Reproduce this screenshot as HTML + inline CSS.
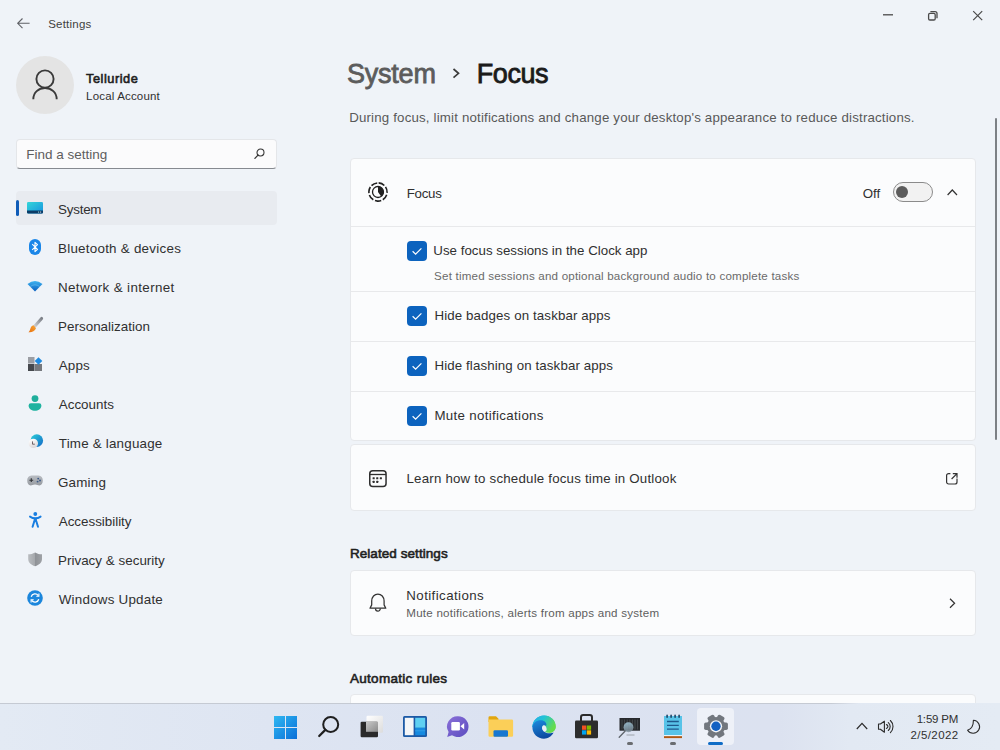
<!DOCTYPE html>
<html><head><meta charset="utf-8">
<style>
*{margin:0;padding:0;box-sizing:border-box}
html,body{width:1000px;height:750px;overflow:hidden}
body{background:#eff3f8;font-family:"Liberation Sans",sans-serif;color:#1b1b1b;position:relative}
.abs{position:absolute}
.t{position:absolute;white-space:nowrap;line-height:1}
.card{position:absolute;background:#fbfcfd;border:1px solid #e6e8eb;border-radius:4px}
.sep{position:absolute;height:1px;background:#e8e9eb}
.chk{position:absolute;width:20px;height:20px;border-radius:4px;background:#0c63be}
.chk svg{position:absolute;left:0;top:0}
svg{position:absolute;overflow:visible}
</style></head>
<body>
<!-- title bar -->
<svg style="left:17px;top:18px" width="13" height="11" viewBox="0 0 13 11"><path d="M5.5 0.5 L0.7 5.3 L5.5 10.1 M0.7 5.3 H12.6" stroke="#5f6166" stroke-width="1.1" fill="none"/></svg>
<svg style="left:860px;top:0px" width="140" height="40" viewBox="860 0 140 40">
<path d="M883 14.8 H893" stroke="#4a4a4a" stroke-width="1.3"/>
<rect x="928.6" y="13.4" width="6.6" height="6.6" rx="1.3" stroke="#4a4a4a" fill="none" stroke-width="1.3"/>
<path d="M930.4 11.6 H935 A2 2 0 0 1 937 13.6 V18.2" stroke="#4a4a4a" fill="none" stroke-width="1.3"/>
<path d="M973.2 11.2 L982.2 20.2 M982.2 11.2 L973.2 20.2" stroke="#4a4a4a" stroke-width="1.2"/>
</svg>

<!-- profile -->
<div class="abs" style="left:16px;top:56px;width:58px;height:58px;border-radius:50%;background:#e4e4e4"></div>
<svg style="left:31px;top:69px" width="28" height="32" viewBox="0 0 28 32"><circle cx="14" cy="10" r="8.6" stroke="#3a3a3a" stroke-width="1.9" fill="none"/><path d="M2.3 30.3 C2.3 23.5 7.5 19 14 19 C20.5 19 25.7 23.5 25.7 30.3" stroke="#3a3a3a" stroke-width="1.9" fill="none"/></svg>

<!-- search -->
<div class="abs" style="left:16px;top:139px;width:261px;height:30px;background:#fbfbfc;border:1px solid #e4e6e9;border-bottom:1px solid #868a90;border-radius:4px"></div>
<svg style="left:253.5px;top:147.5px" width="11" height="12" viewBox="0 0 11 12"><circle cx="6.5" cy="4.5" r="3.5" stroke="#333" stroke-width="1.05" fill="none"/><path d="M4 7.1 L0.9 10.4" stroke="#333" stroke-width="1.25" stroke-linecap="round"/></svg>

<!-- nav selection -->
<div class="abs" style="left:16px;top:191px;width:261px;height:34px;background:#e8ebf0;border-radius:4px"></div>
<div class="abs" style="left:16px;top:200px;width:3px;height:16px;background:#0f5cb8;border-radius:2px"></div>

<!-- nav icons -->
<svg style="left:27px;top:202px" width="16" height="12" viewBox="0 0 16 12"><defs><linearGradient id="gs" x1="0" y1="0" x2="1" y2="1"><stop offset="0" stop-color="#33d6d8"/><stop offset="1" stop-color="#1692e0"/></linearGradient></defs><rect x="0" y="0" width="16" height="11.5" rx="1.3" fill="url(#gs)"/><path d="M0 8.5 H16 V10.3 a1.3 1.3 0 0 1 -1.3 1.3 H1.3 A1.3 1.3 0 0 1 0 10.3 Z" fill="#0d3b66"/><circle cx="11.6" cy="10" r="0.6" fill="#cfe"/><circle cx="13.6" cy="10" r="0.6" fill="#fff"/></svg>
<svg style="left:29px;top:239px" width="12" height="16" viewBox="0 0 12 16"><rect x="0" y="0" width="12" height="16" rx="6" fill="#1a86e8"/><path d="M3.2 5.2 L8.5 10.3 L6 12.6 V3.4 L8.5 5.7 L3.2 10.8" stroke="#fff" stroke-width="1.1" fill="none" stroke-linejoin="round"/></svg>
<svg style="left:27px;top:280px" width="16" height="12" viewBox="0 0 16 12"><defs><linearGradient id="gw" x1="0" y1="0" x2="0" y2="1"><stop offset="0" stop-color="#40b4f0"/><stop offset="1" stop-color="#0a5fc0"/></linearGradient></defs><path d="M0.5 4 Q8 -2 15.5 4 L8 11.5 Z" fill="url(#gw)"/><path d="M3.2 6.6 Q8 3 12.8 6.6" stroke="#7fd0f8" stroke-width="0.8" fill="none" opacity="0.6"/></svg>
<svg style="left:28px;top:317px" width="15" height="16" viewBox="0 0 15 16"><defs><linearGradient id="gb" x1="1" y1="0" x2="0" y2="1"><stop offset="0" stop-color="#7d8188"/><stop offset="1" stop-color="#c9ccd1"/></linearGradient><linearGradient id="go" x1="1" y1="0" x2="0" y2="1"><stop offset="0" stop-color="#f7a83a"/><stop offset="1" stop-color="#e8700e"/></linearGradient></defs><path d="M13.6 1.4 L7 9" stroke="url(#gb)" stroke-width="3" stroke-linecap="round"/><path d="M5.6 8.3 C3.6 8.6 2.8 10.2 2.3 12 C1.9 13.5 1.2 14.6 0.4 15.2 C3.3 15.6 7 14.6 8 11.3 Z" fill="url(#go)"/></svg>
<svg style="left:28px;top:357px" width="15" height="14" viewBox="0 0 15 14"><rect x="0" y="0" width="6.5" height="6.5" fill="#9b9ea4"/><rect x="0" y="7" width="6.5" height="7" fill="#45484d"/><rect x="7" y="7" width="7" height="7" fill="#75787d"/><path d="M10.5 0.2 L14.3 4 L10.5 7.8 L6.7 4 Z" fill="#1f8ae0"/></svg>
<svg style="left:28px;top:395px" width="14" height="16" viewBox="0 0 14 16"><circle cx="7" cy="3.6" r="3.4" fill="#1fae9c"/><path d="M0.6 10.5 a2.3 2.3 0 0 1 2.3 -2.3 H11.1 a2.3 2.3 0 0 1 2.3 2.3 C13.4 14 10 15.8 7 15.8 C4 15.8 0.6 14 0.6 10.5 Z" fill="#1fb3a0"/></svg>
<svg style="left:28px;top:434px" width="16" height="16" viewBox="0 0 16 16"><defs><linearGradient id="gt" x1="0" y1="0" x2="1" y2="1"><stop offset="0" stop-color="#2ad0d8"/><stop offset="1" stop-color="#1468c8"/></linearGradient><linearGradient id="gc" x1="0.3" y1="0" x2="0.7" y2="1"><stop offset="0" stop-color="#ffffff"/><stop offset="1" stop-color="#d9d4d6"/></linearGradient></defs><circle cx="8.8" cy="6.6" r="6.3" fill="url(#gt)"/><circle cx="5.3" cy="9.4" r="4.7" fill="url(#gc)"/><path d="M4.5 7.4 V10.2 H6.8" stroke="#5a4a50" stroke-width="0.85" fill="none"/></svg>
<svg style="left:27px;top:475px" width="16" height="11" viewBox="0 0 16 11"><defs><linearGradient id="gg" x1="0" y1="0" x2="0" y2="1"><stop offset="0" stop-color="#b8bcc2"/><stop offset="1" stop-color="#979ba1"/></linearGradient></defs><path d="M4.5 0.6 H11.5 C14.3 0.6 15.8 2.8 15.8 5.4 C15.8 8.2 14.5 10.4 12.3 10.4 C10.8 10.4 10.2 9.4 8 9.4 C5.8 9.4 5.2 10.4 3.7 10.4 C1.5 10.4 0.2 8.2 0.2 5.4 C0.2 2.8 1.7 0.6 4.5 0.6 Z" fill="url(#gg)"/><path d="M2.4 5.2 H6.2 M4.3 3.3 V7.1" stroke="#33363b" stroke-width="1.15"/><circle cx="11.2" cy="3.6" r="0.95" fill="#3d5a86"/><circle cx="13" cy="5.5" r="0.95" fill="#3d5a86"/><circle cx="10.6" cy="6.6" r="0.95" fill="#3d5a86"/></svg>
<svg style="left:29px;top:512px" width="13" height="16" viewBox="0 0 13 16"><circle cx="6.3" cy="2" r="1.9" fill="#1a7ee0"/><path d="M1 4.6 C3 6 4.5 6.3 6.3 6.3 C8.1 6.3 9.6 6 11.6 4.6" stroke="#1a7ee0" stroke-width="1.9" fill="none" stroke-linecap="round"/><path d="M4.7 5.8 H7.9 V9.8 H4.7 Z" fill="#1a7ee0"/><path d="M5.3 9.3 L3.6 14.8 M7.3 9.3 L9 14.8" stroke="#1a7ee0" stroke-width="2" stroke-linecap="round"/></svg>
<svg style="left:28px;top:552px" width="15" height="15" viewBox="0 0 15 15"><defs><linearGradient id="gp" x1="0" y1="0" x2="1" y2="0"><stop offset="0" stop-color="#b9bcc0"/><stop offset="0.5" stop-color="#a4a7ab"/><stop offset="0.5" stop-color="#8e9196"/><stop offset="1" stop-color="#9fa2a6"/></linearGradient></defs><path d="M7.1 0.6 C9.3 2 11.6 2.3 14 2.3 V7 C14 10.5 11.2 12.9 7.1 14.2 C3 12.9 0.2 10.5 0.2 7 V2.3 C2.6 2.3 4.9 2 7.1 0.6 Z" fill="url(#gp)"/></svg>
<svg style="left:27px;top:590px" width="16" height="16" viewBox="0 0 16 16"><circle cx="8" cy="8" r="7.8" fill="#1b86dc"/><path d="M4.2 6.8 A4 4 0 0 1 11.3 5.6 M11.8 9.2 A4 4 0 0 1 4.7 10.4" stroke="#fff" stroke-width="1.3" fill="none"/><path d="M11.9 3.6 V6.3 H9.3 M4.1 12.4 V9.7 H6.7" stroke="#fff" stroke-width="1.1" fill="none"/></svg>

<!-- header chevron -->
<svg style="left:452px;top:68px" width="9" height="11" viewBox="0 0 9 11"><path d="M1.5 1 L6.5 5.3 L1.5 9.6" stroke="#3b3b3b" stroke-width="1.7" fill="none"/></svg>

<!-- card 1 -->
<div class="card" style="left:350px;top:158px;width:626px;height:283px"></div>
<div class="sep" style="left:351px;top:226px;width:624px"></div>
<div class="sep" style="left:351px;top:291px;width:624px"></div>
<div class="sep" style="left:351px;top:341px;width:624px"></div>
<div class="sep" style="left:351px;top:391px;width:624px"></div>
<svg style="left:368px;top:182.4px" width="20" height="20" viewBox="0 0 20 20"><circle cx="10" cy="10" r="9.1" stroke="#202020" stroke-width="1.6" fill="none" stroke-dasharray="6.35 1.82" transform="rotate(-86 10 10)"/><circle cx="10" cy="10" r="5.5" stroke="#202020" stroke-width="1.3" fill="none"/><path d="M10 4.5 A5.5 5.5 0 0 1 13.2 14.5 L10 10 Z" fill="#202020"/></svg>
<div class="abs" style="left:893px;top:182px;width:40px;height:20px;border:1px solid #8b8b8b;border-radius:10px;background:#f2f2f2"></div>
<div class="abs" style="left:896px;top:186px;width:12px;height:12px;border-radius:50%;background:#5c5c5c"></div>
<svg style="left:947px;top:189px" width="11" height="7" viewBox="0 0 11 7"><path d="M0.6 6 L5.3 1 L10 6" stroke="#333" stroke-width="1.2" fill="none"/></svg>

<div class="chk" style="left:407px;top:241px"><svg width="20" height="20" viewBox="0 0 20 20"><path d="M5.6 10.3 L8.6 13.1 L14.4 7.4" stroke="#fff" stroke-width="1.2" fill="none"/></svg></div>
<div class="chk" style="left:407px;top:306px"><svg width="20" height="20" viewBox="0 0 20 20"><path d="M5.6 10.3 L8.6 13.1 L14.4 7.4" stroke="#fff" stroke-width="1.2" fill="none"/></svg></div>
<div class="chk" style="left:407px;top:356px"><svg width="20" height="20" viewBox="0 0 20 20"><path d="M5.6 10.3 L8.6 13.1 L14.4 7.4" stroke="#fff" stroke-width="1.2" fill="none"/></svg></div>
<div class="chk" style="left:407px;top:406px"><svg width="20" height="20" viewBox="0 0 20 20"><path d="M5.6 10.3 L8.6 13.1 L14.4 7.4" stroke="#fff" stroke-width="1.2" fill="none"/></svg></div>

<!-- card 2 -->
<div class="card" style="left:350px;top:444px;width:626px;height:67px"></div>
<svg style="left:369px;top:470px" width="18" height="17" viewBox="0 0 18 17"><rect x="0.75" y="0.75" width="16.3" height="15.7" rx="3" stroke="#2e2e2e" stroke-width="1.5" fill="none"/><path d="M0.75 4.5 H17" stroke="#2e2e2e" stroke-width="1.3"/><rect x="3.6" y="7.2" width="2.1" height="2.1" rx="0.4" fill="#2e2e2e"/><rect x="7.2" y="7.2" width="2.1" height="2.1" rx="0.4" fill="#2e2e2e"/><rect x="10.8" y="7.2" width="2.1" height="2.1" rx="0.4" fill="#2e2e2e"/><rect x="3.6" y="10.8" width="2.1" height="2.1" rx="0.4" fill="#2e2e2e"/><rect x="7.2" y="10.8" width="2.1" height="2.1" rx="0.4" fill="#2e2e2e"/></svg>
<svg style="left:946px;top:473px" width="12" height="12" viewBox="0 0 12 12"><path d="M4.4 0.6 H2.6 A2 2 0 0 0 0.6 2.6 V9 A2 2 0 0 0 2.6 11 H9 A2 2 0 0 0 11 9 V5.6" stroke="#333" stroke-width="1.2" fill="none"/><path d="M5.6 6 L11 0.6 M6.8 0.6 H11 V4.8" stroke="#333" stroke-width="1.2" fill="none"/></svg>

<!-- card 3 -->
<div class="card" style="left:350px;top:570px;width:626px;height:66px"></div>
<svg style="left:369px;top:593px" width="18" height="20" viewBox="0 0 18 20"><path d="M1 15.2 L2.7 11.9 V8 C2.7 4 5.5 1 8.9 1 C12.3 1 15.1 4 15.1 8 V11.9 L16.8 15.2 Z" stroke="#333" stroke-width="1.25" fill="none" stroke-linejoin="round"/><path d="M6.5 15.5 A2.4 2.6 0 0 0 11.3 15.5" stroke="#333" stroke-width="1.25" fill="none"/></svg>
<svg style="left:949px;top:598px" width="7" height="11" viewBox="0 0 7 11"><path d="M1 0.8 L5.6 5.3 L1 9.8" stroke="#333" stroke-width="1.2" fill="none"/></svg>

<!-- card 4 -->
<div class="card" style="left:350px;top:694px;width:626px;height:66px"></div>

<!-- scrollbar -->
<div class="abs" style="left:995px;top:118px;width:2px;height:321.5px;background:#7c8085;border-radius:1px"></div>

<!-- taskbar -->
<div class="abs" style="left:0;top:703px;width:1000px;height:47px;background:linear-gradient(90deg,#e3eaf4 0,#dee5f2 270px,#dbe2f1 500px,#dce2f0 780px,#e2e9f3 850px,#e4ebf4 1000px)"></div>
<div class="abs" style="left:0;top:703px;width:860px;height:1px;background:linear-gradient(90deg,#c5cad3 0,#c5cad3 830px,rgba(197,202,211,0) 860px)"></div>
<div class="abs" style="left:697px;top:708px;width:37px;height:37px;background:#eef1f8;border-radius:4px"></div>
<!-- start -->
<svg style="left:274px;top:716px" width="23" height="23" viewBox="0 0 23 23"><defs><linearGradient id="ws" x1="0" y1="0" x2="1" y2="1"><stop offset="0" stop-color="#2fb8f2"/><stop offset="1" stop-color="#0a6fd8"/></linearGradient></defs><path d="M0 0 H11 V11 H0 Z M12 0 H23 V11 H12 Z M0 12 H11 V23 H0 Z M12 12 H23 V23 H12 Z" fill="url(#ws)"/></svg>
<!-- search -->
<svg style="left:317px;top:715px" width="24" height="24" viewBox="0 0 24 24"><circle cx="13.7" cy="9.5" r="7.5" stroke="#1f1f1f" stroke-width="2" fill="none"/><path d="M8.3 14.9 L2.2 21" stroke="#1f1f1f" stroke-width="2.2" stroke-linecap="round"/></svg>
<!-- task view -->
<svg style="left:360px;top:715px" width="24" height="23" viewBox="0 0 24 23"><defs><linearGradient id="tv" x1="0" y1="0" x2="1" y2="1"><stop offset="0" stop-color="#ffffff"/><stop offset="1" stop-color="#dcdcdc"/></linearGradient><linearGradient id="tv2" x1="0" y1="0" x2="1" y2="1"><stop offset="0" stop-color="#c8c8c8"/><stop offset="1" stop-color="#8a8a8a"/></linearGradient></defs><rect x="6.5" y="0.7" width="16.5" height="17" rx="1.2" fill="url(#tv)"/><rect x="0.6" y="6.8" width="17.4" height="15.5" rx="1.2" fill="#2a2a2a"/><rect x="6" y="6.8" width="12" height="10" fill="url(#tv2)"/></svg>
<!-- widgets -->
<svg style="left:403px;top:716px" width="24" height="21" viewBox="0 0 24 21"><rect x="0" y="0" width="24" height="21" rx="1.5" fill="#1c5aa6"/><rect x="1.8" y="1.8" width="8.8" height="17.4" fill="#f4f6f8"/><rect x="12.2" y="1.8" width="10" height="10" fill="#5fd0f2"/><rect x="12.2" y="11.8" width="10" height="7.4" fill="#168ae0"/><path d="M12.2 14.8 H22.2" stroke="#3aa6ea" stroke-width="0.8"/></svg>
<!-- teams -->
<svg style="left:446px;top:716px" width="24" height="22" viewBox="0 0 24 22"><defs><linearGradient id="tm" x1="0" y1="0" x2="1" y2="1"><stop offset="0" stop-color="#8a6fd8"/><stop offset="1" stop-color="#5b4dbf"/></linearGradient></defs><path d="M12 0.2 A10.6 10.4 0 1 1 6 19.2 L1.2 21 L2.6 16 A10.6 10.4 0 0 1 12 0.2 Z" fill="url(#tm)"/><rect x="5.3" y="6" width="8.6" height="8.4" rx="1.2" fill="#fff"/><path d="M14.5 10.2 L18.2 7 V13.4 Z" fill="#fff"/></svg>
<!-- explorer -->
<svg style="left:488px;top:716px" width="26" height="21" viewBox="0 0 26 21"><path d="M0.5 1.5 A1.2 1.2 0 0 1 1.7 0.3 H8 L10.5 2.7 V6 H0.5 Z" fill="#e2a60f"/><path d="M0.5 3.5 H23.8 A1.3 1.3 0 0 1 25.1 4.8 V19.5 A1.3 1.3 0 0 1 23.8 20.8 H1.8 A1.3 1.3 0 0 1 0.5 19.5 Z" fill="#fbcf58"/><rect x="5.5" y="14.3" width="14.5" height="6.5" rx="1.2" fill="#1777d0"/></svg>
<!-- edge -->
<svg style="left:532px;top:715px" width="25" height="24" viewBox="0 0 25 24"><defs><linearGradient id="e1" x1="0" y1="0" x2="1" y2="0.5"><stop offset="0" stop-color="#2aa8ea"/><stop offset="0.45" stop-color="#22c3d6"/><stop offset="1" stop-color="#66dc4c"/></linearGradient><linearGradient id="e2" x1="0" y1="0" x2="0.4" y2="1"><stop offset="0" stop-color="#1c8de0"/><stop offset="1" stop-color="#0b4aa0"/></linearGradient></defs>
<path d="M12 0.4 C18.6 0.4 23.7 5.3 23.7 11.5 C23.7 15.5 20.8 17.8 17.2 17.8 C13.5 17.8 11 15.8 11 13 C11 10.6 13 9 12.6 9 Z M12 0.4 C5.6 0.4 0.4 5.6 0.4 12 L8 12 Z" fill="url(#e1)"/>
<path d="M12 0.4 C18.6 0.4 23.7 5.3 23.7 11.5 C23.7 15 21 17.5 17.5 17.7 L12 12 L0.4 12 C0.4 5.6 5.6 0.4 12 0.4 Z" fill="url(#e1)"/>
<path d="M0.4 12.5 C0.6 7.8 4.5 5.2 8.6 5.2 C12 5.2 14.4 7.2 14.4 9.6 L14.2 10.8 C13.2 10.2 11.4 10.1 10.4 11.6 C9.3 13.6 10.7 16.9 14.6 17.9 C17.2 18.5 20.2 18.1 21.6 17.5 C19.6 21.4 16 23.7 12 23.7 C5.6 23.7 0.4 18.6 0.4 12.5 Z" fill="url(#e2)"/>
<ellipse cx="12.4" cy="13.3" rx="2.1" ry="3.2" transform="rotate(-15 12.4 13.3)" fill="#e9eef5"/>
</svg>
<!-- store -->
<svg style="left:575px;top:714px" width="23" height="25" viewBox="0 0 23 25"><path d="M6 7 V3.2 A2.2 2.2 0 0 1 8.2 1 H14.8 A2.2 2.2 0 0 1 17 3.2 V7" stroke="#2b2b2b" stroke-width="2" fill="none"/><rect x="0" y="6.5" width="23" height="17.8" rx="1.3" fill="#2d2d2d"/><rect x="7" y="11.5" width="4.3" height="4.3" fill="#f25022"/><rect x="11.8" y="11.5" width="4.3" height="4.3" fill="#7fba00"/><rect x="7" y="16.3" width="4.3" height="4.3" fill="#00a4ef"/><rect x="11.8" y="16.3" width="4.3" height="4.3" fill="#ffb900"/></svg>
<!-- snipping/magnifier -->
<svg style="left:617px;top:717px" width="25" height="22" viewBox="0 0 25 22"><defs><linearGradient id="lens" x1="0" y1="0" x2="0.3" y2="1"><stop offset="0" stop-color="#a8d2e6" stop-opacity="0.85"/><stop offset="1" stop-color="#7b8a96" stop-opacity="0.8"/></linearGradient></defs><rect x="2.5" y="1" width="20.5" height="12.7" fill="#26282c"/><path d="M5 2.5 V12.5 M7.6 2.5 V12.5 M10.2 2.5 V12.5 M12.8 2.5 V12.5 M15.4 2.5 V12.5 M18 2.5 V12.5 M20.6 2.5 V12.5" stroke="#5d6166" stroke-width="0.7" opacity="0.8"/><circle cx="11.5" cy="10.3" r="5" fill="url(#lens)"/><path d="M8.2 14 L2.2 20.2" stroke="#5f656c" stroke-width="1.3" stroke-linecap="round"/><path d="M9.5 18 H17.5" stroke="#8d949a" stroke-width="0.8"/></svg>
<div class="abs" style="left:627px;top:742px;width:6px;height:3px;background:#6a6c70;border-radius:2px"></div>
<!-- notepad -->
<svg style="left:664px;top:714px" width="18" height="25" viewBox="0 0 18 25"><rect x="0" y="2" width="18" height="20.5" fill="#58c3e8"/><rect x="0" y="21" width="18" height="1.3" fill="#e9f5fa"/><rect x="0" y="22.2" width="18" height="1.9" fill="#b4570f"/><rect x="2.3" y="0.6" width="1.6" height="3.4" rx="0.8" fill="#1b4466"/><rect x="6.3" y="0.6" width="1.6" height="3.4" rx="0.8" fill="#1b4466"/><rect x="10.3" y="0.6" width="1.6" height="3.4" rx="0.8" fill="#1b4466"/><rect x="14.3" y="0.6" width="1.6" height="3.4" rx="0.8" fill="#1b4466"/><path d="M3 7.5 H14.8 M3 11.4 H14.8 M3 15.2 H14.8" stroke="#1f5a8c" stroke-width="1.3"/></svg>
<div class="abs" style="left:670px;top:742px;width:6px;height:3px;background:#6a6c70;border-radius:2px"></div>
<!-- settings gear -->
<svg style="left:703.5px;top:715px" width="24" height="23" viewBox="-12 -11.3 24 23"><circle r="9.2" fill="#72777e"/><rect x="5" y="-3.7" width="6.9" height="7.4" rx="1.7" transform="rotate(0)" fill="#72777e"/><rect x="5" y="-3.7" width="6.9" height="7.4" rx="1.7" transform="rotate(60)" fill="#72777e"/><rect x="5" y="-3.7" width="6.9" height="7.4" rx="1.7" transform="rotate(120)" fill="#72777e"/><rect x="5" y="-3.7" width="6.9" height="7.4" rx="1.7" transform="rotate(180)" fill="#72777e"/><rect x="5" y="-3.7" width="6.9" height="7.4" rx="1.7" transform="rotate(240)" fill="#72777e"/><rect x="5" y="-3.7" width="6.9" height="7.4" rx="1.7" transform="rotate(300)" fill="#72777e"/><circle r="6.1" fill="#f3f5f9"/><circle r="4.7" fill="#1461c2"/></svg>
<div class="abs" style="left:708px;top:742px;width:15px;height:3px;background:#0f6cc6;border-radius:2px"></div>
<!-- tray -->
<svg style="left:856px;top:722px" width="12" height="8" viewBox="0 0 12 8"><path d="M0.8 7 L6 1.4 L11.2 7" stroke="#2b2b2b" stroke-width="1.2" fill="none"/></svg>
<svg style="left:878px;top:720px" width="16" height="14" viewBox="0 0 16 14"><path d="M0.5 4 H2.4 L6.4 1.2 V12.3 L2.4 9.3 H0.5 Z" stroke="#2b2b2b" stroke-width="1.1" fill="none" stroke-linejoin="round"/><path d="M8.4 4.6 A1.95 1.95 0 0 1 8.4 8.4 M10.3 2.6 A5.1 5.1 0 0 1 10.3 10.5 M12.4 0.5 A8.45 8.45 0 0 1 12.4 12.7" stroke="#2b2b2b" stroke-width="1.1" fill="none" stroke-linecap="round"/></svg>
<svg style="left:967px;top:719px" width="14" height="15" viewBox="0 0 14 15"><path d="M6.4 1.3 A6.5 6.5 0 1 1 0.6 11.3 Q6.5 9.5 6.4 1.3 Z" stroke="#2b2b2b" stroke-width="1.1" fill="none" stroke-linejoin="round"/></svg>

<div class="t" style="left:48.20px;top:19.37px;font-size:11.5px;font-weight:400;color:#3f3f3f;letter-spacing:0.214px;">Settings</div>
<div class="t" style="left:86.00px;top:72.86px;font-size:12.8px;font-weight:400;color:#1f1f1f;letter-spacing:0.525px;-webkit-text-stroke:0.6px #1f1f1f;">Telluride</div>
<div class="t" style="left:86.10px;top:90.97px;font-size:11.5px;font-weight:400;color:#303030;letter-spacing:0.167px;">Local Account</div>
<div class="t" style="left:26.20px;top:148.17px;font-size:13.5px;font-weight:400;color:#5e5e5e;letter-spacing:0.000px;">Find a setting</div>
<div class="t" style="left:57.98px;top:203.46px;font-size:13.4px;font-weight:400;color:#303030;letter-spacing:-0.220px;">System</div>
<div class="t" style="left:57.98px;top:242.46px;font-size:13.4px;font-weight:400;color:#303030;letter-spacing:0.250px;">Bluetooth &amp; devices</div>
<div class="t" style="left:57.98px;top:281.46px;font-size:13.4px;font-weight:400;color:#303030;letter-spacing:0.365px;">Network &amp; internet</div>
<div class="t" style="left:57.98px;top:320.46px;font-size:13.4px;font-weight:400;color:#303030;letter-spacing:0.036px;">Personalization</div>
<div class="t" style="left:58.78px;top:359.46px;font-size:13.4px;font-weight:400;color:#303030;letter-spacing:0.167px;">Apps</div>
<div class="t" style="left:58.78px;top:398.46px;font-size:13.4px;font-weight:400;color:#303030;letter-spacing:0.000px;">Accounts</div>
<div class="t" style="left:58.78px;top:437.46px;font-size:13.4px;font-weight:400;color:#303030;letter-spacing:0.200px;">Time &amp; language</div>
<div class="t" style="left:57.98px;top:476.46px;font-size:13.4px;font-weight:400;color:#303030;letter-spacing:0.200px;">Gaming</div>
<div class="t" style="left:58.78px;top:515.46px;font-size:13.4px;font-weight:400;color:#303030;letter-spacing:-0.017px;">Accessibility</div>
<div class="t" style="left:57.98px;top:554.46px;font-size:13.4px;font-weight:400;color:#303030;letter-spacing:0.024px;">Privacy &amp; security</div>
<div class="t" style="left:58.78px;top:593.46px;font-size:13.4px;font-weight:400;color:#303030;letter-spacing:0.215px;">Windows Update</div>
<div class="t" style="left:346.98px;top:61.24px;font-size:27px;font-weight:400;color:#5c5c5c;letter-spacing:-0.220px;-webkit-text-stroke:0.8px #5c5c5c;">System</div>
<div class="t" style="left:476.84px;top:61.24px;font-size:27px;font-weight:400;color:#1b1b1b;letter-spacing:-0.450px;-webkit-text-stroke:0.8px #1b1b1b;">Focus</div>
<div class="t" style="left:349.20px;top:111.34px;font-size:13.3px;font-weight:400;color:#595959;letter-spacing:0.170px;">During focus, limit notifications and change your desktop's appearance to reduce distractions.</div>
<div class="t" style="left:406.64px;top:187.04px;font-size:13.3px;font-weight:400;color:#303030;letter-spacing:-0.250px;">Focus</div>
<div class="t" style="left:862.66px;top:186.64px;font-size:13.3px;font-weight:400;color:#303030;letter-spacing:0.000px;">Off</div>
<div class="t" style="left:433.30px;top:243.64px;font-size:13.3px;font-weight:400;color:#303030;letter-spacing:0.015px;">Use focus sessions in the Clock app</div>
<div class="t" style="left:434.10px;top:269.78px;font-size:11.6px;font-weight:400;color:#6a6a6a;letter-spacing:0.194px;">Set timed sessions and optional background audio to complete tasks</div>
<div class="t" style="left:434.42px;top:309.24px;font-size:13.3px;font-weight:400;color:#303030;letter-spacing:0.119px;">Hide badges on taskbar apps</div>
<div class="t" style="left:434.42px;top:358.94px;font-size:13.3px;font-weight:400;color:#303030;letter-spacing:0.121px;">Hide flashing on taskbar apps</div>
<div class="t" style="left:434.42px;top:408.84px;font-size:13.3px;font-weight:400;color:#303030;letter-spacing:0.329px;">Mute notifications</div>
<div class="t" style="left:406.52px;top:472.04px;font-size:13.3px;font-weight:400;color:#303030;letter-spacing:0.193px;">Learn how to schedule focus time in Outlook</div>
<div class="t" style="left:349.88px;top:547.37px;font-size:13.5px;font-weight:400;color:#1f1f1f;letter-spacing:0.067px;-webkit-text-stroke:0.6px #1f1f1f;">Related settings</div>
<div class="t" style="left:406.30px;top:589.14px;font-size:13.3px;font-weight:400;color:#303030;letter-spacing:0.417px;">Notifications</div>
<div class="t" style="left:406.30px;top:606.78px;font-size:11.6px;font-weight:400;color:#5e5e5e;letter-spacing:0.228px;">Mute notifications, alerts from apps and system</div>
<div class="t" style="left:350.00px;top:672.37px;font-size:13.5px;font-weight:400;color:#1f1f1f;letter-spacing:0.286px;-webkit-text-stroke:0.6px #1f1f1f;">Automatic rules</div>
<div class="t" style="left:916.64px;top:714.37px;font-size:11.5px;font-weight:400;color:#303030;letter-spacing:-0.167px;">1:59 PM</div>
<div class="t" style="left:910.44px;top:729.97px;font-size:11.5px;font-weight:400;color:#303030;letter-spacing:0.429px;">2/5/2022</div>
</body></html>
